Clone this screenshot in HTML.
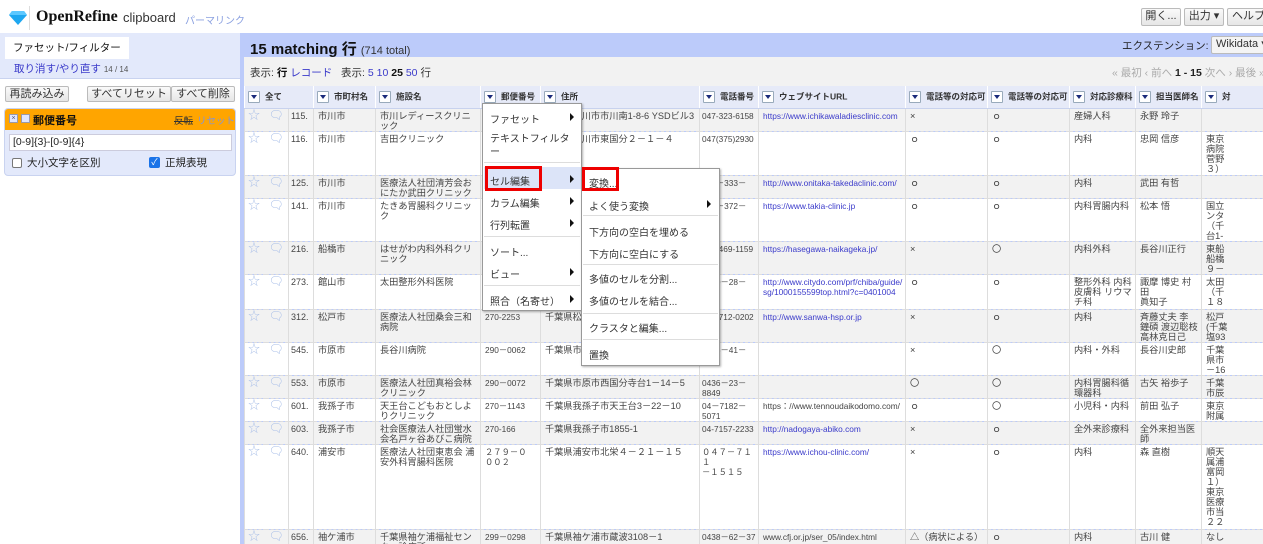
<!DOCTYPE html>
<html><head><meta charset="utf-8"><style>
*{box-sizing:border-box;margin:0;padding:0}
html{overflow:hidden}
body{width:1263px;height:544px;overflow:hidden;background:#fff;font-family:"Liberation Sans","Noto Sans CJK JP",sans-serif;color:#222;position:relative}
.a{position:absolute}
.btn{position:absolute;border:1px solid #bbb;background:linear-gradient(#fafafa,#e6e6e6);border-radius:2px;font-size:11px;color:#333;text-align:center;line-height:15px;white-space:nowrap;overflow:hidden}
a,.l{color:#3a3aca;text-decoration:none}
.clip{position:absolute;left:0;top:0;width:1263px;height:544px;overflow:hidden}
table{position:absolute;left:244px;top:86px;border-collapse:collapse;table-layout:fixed;width:1100px;font-size:9.2px;line-height:10px;color:#444}
td{vertical-align:top;padding:2px 2px 0 4px;border-left:1px solid #ddd;border-bottom:1px dashed #ddd;overflow:hidden;word-break:break-all;background:#fff}
td:nth-child(6),td:nth-child(8),td:nth-child(9){font-size:8.3px}
td:nth-child(8){padding-left:2px}
td:nth-child(3){white-space:nowrap;padding-left:2px;font-size:9px}
th{background:#e6eaf8;height:22px;text-align:left;font-size:8.5px;font-weight:bold;color:#333;padding:0 3px;border-left:1px solid #fff;border-bottom:1px solid #c8d2ee;white-space:nowrap;overflow:hidden}
.dd{display:inline-block;width:12px;height:12px;border:1px solid #9ab;background:#fff;vertical-align:middle;margin-right:5px;position:relative;border-radius:1px}
.dd:after{content:"";position:absolute;left:2px;top:3px;border-left:3.5px solid transparent;border-right:3.5px solid transparent;border-top:4px solid #1a2a7a}
tr.g td{background:#f2f2f2}
td.s,td.f{border-left:none;color:#a9bfe8;font-size:12px;padding:1px 0 0 3px}
td.s{border-left:1px solid #ddd}
.menu{position:absolute;background:#fff;border:1px solid #999;box-shadow:1px 1px 2px rgba(0,0,0,.3);font-size:10px;color:#333}
.mi{position:absolute;left:7px;white-space:nowrap}
.ar{position:absolute;width:0;height:0;border-top:4px solid transparent;border-bottom:4px solid transparent;border-left:4px solid #111}
.sep{position:absolute;left:1px;right:1px;height:1px;background:#ddd}
.red{position:absolute;border:3px solid #e00}
</style></head><body>
<div class="clip">
<svg class="a" style="left:9px;top:11px" width="18" height="14" viewBox="0 0 18 14"><polygon points="3,0 15,0 18,4 9,14 0,4" fill="#1ea7f0"/><polygon points="3,0 15,0 18,4 0,4" fill="#5cc8ff"/></svg>
<div class="a" style="left:29px;top:6px;width:1px;height:24px;background:#ddd"></div>
<div class="a" style="left:36px;top:8px;font-family:'Liberation Serif',serif;font-weight:bold;font-size:16px;color:#111">OpenRefine</div>
<div class="a" style="left:123px;top:10px;font-size:13px;color:#333">clipboard</div>
<div class="a" style="left:185px;top:12px;font-size:10px;color:#8aa0e0">パーマリンク</div>
<div class="btn" style="left:1141px;top:8px;width:40px;height:18px">開く...</div>
<div class="btn" style="left:1184px;top:8px;width:40px;height:18px">出力 ▾</div>
<div class="btn" style="left:1227px;top:8px;width:45px;height:18px;text-align:left;padding-left:4px">ヘルプ</div>
<div class="a" style="left:0;top:33px;width:240px;height:45px;background:#e3e9fb"></div>
<div class="a" style="left:5px;top:37px;width:124px;height:22px;background:#fff;font-size:10.5px;line-height:22px;padding-left:8px;color:#111;white-space:nowrap">ファセット/フィルター</div>
<div class="a" style="left:14px;top:61px;font-size:10.5px;color:#3a3aca">取り消す/やり直す <span style="font-size:8px;color:#555">14 / 14</span></div>
<div class="a" style="left:0;top:78px;width:240px;height:1px;background:#c9d3f0"></div>
<div class="btn" style="left:5px;top:86px;width:64px;height:16px">再読み込み</div>
<div class="btn" style="left:87px;top:86px;width:84px;height:16px">すべてリセット</div>
<div class="btn" style="left:171px;top:86px;width:64px;height:16px">すべて削除</div>
<div class="a" style="left:4px;top:108px;width:232px;height:68px;background:#e3e9fb;border:1px solid #c9d3f0;border-radius:4px;overflow:hidden">
 <div style="height:21px;background:#ffa500;position:relative">
  <div class="a" style="left:4px;top:5px;width:9px;height:9px;background:#dfe6ff;border:1px solid #99a;font-size:7px;line-height:7px;text-align:center;color:#557">×</div>
  <div class="a" style="left:16px;top:5px;width:9px;height:9px;background:#dfe6ff;border:1px solid #99a"></div>
  <div class="a" style="left:28px;top:3px;font-size:11px;font-weight:bold;color:#111">郵便番号</div>
  <div class="a" style="left:169px;top:4px;font-size:9.5px;color:#333;text-decoration:line-through">反転</div>
  <div class="a" style="left:192px;top:4px;font-size:9.5px;color:#7f95dd">リセット</div>
 </div>
 <div class="a" style="left:4px;top:25px;width:223px;height:17px;background:#fff;border:1px solid #ccd;font-size:10.5px;line-height:15px;padding-left:3px;color:#222">[0-9]{3}-[0-9]{4}</div>
 <div class="a" style="left:7px;top:49px;width:10px;height:10px;border:1px solid #777;background:#fff;border-radius:2px"></div>
 <div class="a" style="left:22px;top:46px;font-size:10.5px;color:#222">大小文字を区別</div>
 <div class="a" style="left:144px;top:48px;width:11px;height:11px;background:#1a73e8;border-radius:2px;color:#fff;font-size:9px;line-height:11px;text-align:center">✓</div>
 <div class="a" style="left:160px;top:46px;font-size:10.5px;color:#222">正規表現</div>
</div>
<div class="a" style="left:240px;top:33px;width:1023px;height:511px;background:#bccbfa"></div>
<div class="a" style="left:250px;top:38px;font-size:15px;font-weight:bold;color:#111">15 matching 行 <span style="font-size:11px;font-weight:normal;color:#333">(714 total)</span></div>
<div class="a" style="left:1122px;top:38px;font-size:10.5px;color:#222;white-space:nowrap">エクステンション:</div>
<div class="btn" style="left:1211px;top:36px;width:60px;height:18px;text-align:left;padding-left:4px;background:#f4f4f4">Wikidata ▾</div>
<div class="a" style="left:244px;top:57px;width:1019px;height:29px;background:#f2f2f2"></div>
<div class="a" style="left:250px;top:65px;font-size:10.5px;color:#333">表示: <b style="color:#111">行</b> <span class="l">レコード</span> &nbsp; 表示: <span class="l">5</span> <span class="l">10</span> <b style="color:#111">25</b> <span class="l">50</span> 行</div>
<div class="a" style="left:1112px;top:65px;font-size:10.5px;color:#aaa;white-space:nowrap">« 最初 ‹ 前へ <b style="color:#222">1 - 15</b> 次へ › 最後 »</div>
<table>
<colgroup><col style="width:21px"><col style="width:23px"><col style="width:25px"><col style="width:62px"><col style="width:105px"><col style="width:60px"><col style="width:159px"><col style="width:59px"><col style="width:147px"><col style="width:82px"><col style="width:82px"><col style="width:66px"><col style="width:66px"><col style="width:143px"></colgroup>
<tr><th colspan="3"><span class="dd"></span>全て</th><th><span class="dd"></span>市町村名</th><th><span class="dd"></span>施設名</th><th><span class="dd"></span>郵便番号</th><th><span class="dd"></span>住所</th><th><span class="dd"></span>電話番号</th><th><span class="dd"></span>ウェブサイトURL</th><th><span class="dd"></span>電話等の対応可</th><th><span class="dd"></span>電話等の対応可</th><th><span class="dd"></span>対応診療科</th><th><span class="dd"></span>担当医師名</th><th><span class="dd"></span>対</th></tr>
<tr class="g" style="height:23px"><td class="s">☆</td><td class="f">🗨</td><td>115.</td><td>市川市</td><td>市川レディースクリニック</td><td></td><td>千葉県市川市市川南1-8-6 YSDビル3F</td><td>047-323-6158</td><td><a>https://www.ichikawaladiesclinic.com</a></td><td>×</td><td>ｏ</td><td>産婦人科</td><td>永野 玲子</td><td></td></tr>
<tr style="height:44px"><td class="s">☆</td><td class="f">🗨</td><td>116.</td><td>市川市</td><td>吉田クリニック</td><td></td><td>千葉県市川市東国分２－１－４</td><td>047(375)2930</td><td></td><td>ｏ</td><td>ｏ</td><td>内科</td><td>忠岡 信彦</td><td>東京<br>病院<br>菅野<br>３）</td></tr>
<tr class="g" style="height:23px"><td class="s">☆</td><td class="f">🗨</td><td>125.</td><td>市川市</td><td>医療法人社団清芳会おにたか武田クリニック</td><td></td><td></td><td>047－333－</td><td><a>http://www.onitaka-takedaclinic.com/</a></td><td>ｏ</td><td>ｏ</td><td>内科</td><td>武田 有哲</td><td></td></tr>
<tr style="height:43px"><td class="s">☆</td><td class="f">🗨</td><td>141.</td><td>市川市</td><td>たきあ胃腸科クリニック</td><td></td><td></td><td>047－372－</td><td><a>https://www.takia-clinic.jp</a></td><td>ｏ</td><td>ｏ</td><td>内科胃腸内科</td><td>松本 悟</td><td>国立<br>ンタ<br>（千<br>台1-</td></tr>
<tr class="g" style="height:33px"><td class="s">☆</td><td class="f">🗨</td><td>216.</td><td>船橋市</td><td>はせがわ内科外科クリニック</td><td></td><td></td><td>047-469-1159</td><td><a>https://hasegawa-naikageka.jp/</a></td><td>×</td><td>〇</td><td>内科外科</td><td>長谷川正行</td><td>東船<br>船橋<br>９－</td></tr>
<tr style="height:35px"><td class="s">☆</td><td class="f">🗨</td><td>273.</td><td>館山市</td><td>太田整形外科医院</td><td></td><td></td><td>0470－28－</td><td><a>http://www.citydo.com/prf/chiba/guide/sg/1000155599top.html?c=0401004</a></td><td>ｏ</td><td>ｏ</td><td>整形外科 内科<br>皮膚科 リウマ<br>チ科</td><td>諏摩 博史 村田<br>眞知子</td><td>太田<br>（千<br>１８</td></tr>
<tr class="g" style="height:33px"><td class="s">☆</td><td class="f">🗨</td><td>312.</td><td>松戸市</td><td>医療法人社団桑会三和病院</td><td>270-2253</td><td>千葉県松戸市</td><td>047-712-0202</td><td><a>http://www.sanwa-hsp.or.jp</a></td><td>×</td><td>ｏ</td><td>内科</td><td>斉藤丈夫 李<br>鐘碩 渡辺聡枝<br>高林克日己</td><td>松戸<br>(千葉<br>塩93</td></tr>
<tr style="height:33px"><td class="s">☆</td><td class="f">🗨</td><td>545.</td><td>市原市</td><td>長谷川病院</td><td>290－0062</td><td>千葉県市原市</td><td>0436－41－</td><td></td><td>×</td><td>〇</td><td>内科・外科</td><td>長谷川史郎</td><td>千葉<br>県市<br>－16</td></tr>
<tr class="g" style="height:23px"><td class="s">☆</td><td class="f">🗨</td><td>553.</td><td>市原市</td><td>医療法人社団真裕会林クリニック</td><td>290－0072</td><td>千葉県市原市西国分寺台1－14－5</td><td>0436－23－<br>8849</td><td></td><td>〇</td><td>〇</td><td>内科胃腸科循環器科</td><td>古矢 裕歩子</td><td>千葉<br>市辰</td></tr>
<tr style="height:23px"><td class="s">☆</td><td class="f">🗨</td><td>601.</td><td>我孫子市</td><td>天王台こどもおとしよりクリニック</td><td>270－1143</td><td>千葉県我孫子市天王台3－22－10</td><td>04－7182－<br>5071</td><td>https：//www.tennoudaikodomo.com/</td><td>ｏ</td><td>〇</td><td>小児科・内科</td><td>前田 弘子</td><td>東京<br>附属</td></tr>
<tr class="g" style="height:23px"><td class="s">☆</td><td class="f">🗨</td><td>603.</td><td>我孫子市</td><td>社会医療法人社団蛍水会名戸ヶ谷あびこ病院</td><td>270-166</td><td>千葉県我孫子市1855-1</td><td>04-7157-2233</td><td><a>http://nadogaya-abiko.com</a></td><td>×</td><td>ｏ</td><td>全外来診療科</td><td>全外来担当医師</td><td></td></tr>
<tr style="height:85px"><td class="s">☆</td><td class="f">🗨</td><td>640.</td><td>浦安市</td><td>医療法人社団東恵会 浦安外科胃腸科医院</td><td>２７９－０<br>００２</td><td>千葉県浦安市北栄４－２１－１５</td><td>０４７－７１<br>１<br>－１５１５</td><td><a>https://www.ichou-clinic.com/</a></td><td>×</td><td>ｏ</td><td>内科</td><td>森 直樹</td><td>順天<br>属浦<br>富岡<br>１）<br>東京<br>医療<br>市当<br>２２</td></tr>
<tr class="g" style="height:30px"><td class="s">☆</td><td class="f">🗨</td><td>656.</td><td>袖ケ浦市</td><td>千葉県袖ケ浦福祉センター診療所</td><td>299－0298</td><td>千葉県袖ケ浦市蔵波3108－1</td><td>0438－62－3746</td><td>www.cfj.or.jp/ser_05/index.html</td><td>△（病状による）</td><td>ｏ</td><td>内科</td><td>古川 健</td><td>なし</td></tr>
</table>
<div class="menu" style="left:482px;top:103px;width:100px;height:208px">
 <div class="mi" style="top:7px">ファセット</div><div class="ar" style="left:87px;top:9px"></div>
 <div class="mi" style="top:29px;width:80px;line-height:13px;white-space:normal">テキストフィルター</div>
 <div class="sep" style="top:58px"></div>
 <div class="a" style="left:1px;top:63px;width:97px;height:22px;background:#dce4f8"></div>
 <div class="mi" style="top:69px">セル編集</div><div class="ar" style="left:87px;top:71px"></div>
 <div class="mi" style="top:91px">カラム編集</div><div class="ar" style="left:87px;top:93px"></div>
 <div class="mi" style="top:113px">行列転置</div><div class="ar" style="left:87px;top:115px"></div>
 <div class="sep" style="top:132px"></div>
 <div class="mi" style="top:140px">ソート...</div>
 <div class="mi" style="top:162px">ビュー</div><div class="ar" style="left:87px;top:164px"></div>
 <div class="sep" style="top:181px"></div>
 <div class="mi" style="top:189px">照合（名寄せ）</div><div class="ar" style="left:87px;top:191px"></div>
</div>
<div class="red" style="left:485px;top:166px;width:57px;height:25px"></div>
<div class="menu" style="left:581px;top:168px;width:139px;height:198px">
 <div class="mi" style="top:6px">変換...</div>
 <div class="mi" style="top:29px">よく使う変換</div><div class="ar" style="left:125px;top:31px"></div>
 <div class="sep" style="top:46px"></div>
 <div class="mi" style="top:55px">下方向の空白を埋める</div>
 <div class="mi" style="top:77px">下方向に空白にする</div>
 <div class="sep" style="top:95px"></div>
 <div class="mi" style="top:102px">多値のセルを分割...</div>
 <div class="mi" style="top:124px">多値のセルを結合...</div>
 <div class="sep" style="top:144px"></div>
 <div class="mi" style="top:151px">クラスタと編集...</div>
 <div class="sep" style="top:170px"></div>
 <div class="mi" style="top:178px">置換</div>
</div>
<div class="red" style="left:582px;top:167px;width:37px;height:24px"></div>
</div>
</body></html>
